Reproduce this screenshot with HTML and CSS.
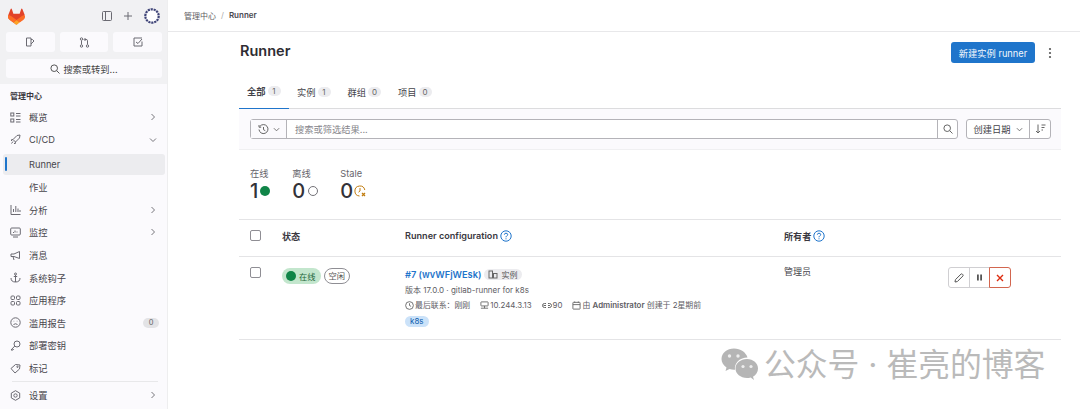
FILE: index.html
```html
<!DOCTYPE html>
<html lang="zh">
<head>
<meta charset="utf-8">
<title>Runner</title>
<link rel="stylesheet" href="styles.css">
</head>
<body>
<div class="app">
<aside class="sidebar">
  <div class="side-top">
    <div class="top-row">
      <svg class="logo" viewBox="0 0 25 24" width="17" height="17"><path fill="#e24329" d="M24.5 9.7l-.03-.09L21.1.8a.9.9 0 0 0-1.7.1l-2.28 7H7.9L5.6.9A.9.9 0 0 0 3.9.8L.53 9.6l-.03.1a6.2 6.2 0 0 0 2.06 7.2l5.2 3.9 3.6 2.7a1 1 0 0 0 1.2 0l3.6-2.7 5.2-3.9a6.2 6.2 0 0 0 2.14-7.2z"/><path fill="#fc6d26" d="M24.5 9.7A11.5 11.5 0 0 0 19.9 11.7L12.5 17.3l4.7 3.6 5.2-3.9a6.2 6.2 0 0 0 2.1-7.3z"/><path fill="#fca326" d="M7.8 20.9l2.5 1.9 1.6 1.2a1 1 0 0 0 1.2 0l1.6-1.2 2.5-1.9-4.7-3.6z"/><path fill="#fc6d26" d="M5.1 11.7A11.5 11.5 0 0 0 .5 9.7a6.2 6.2 0 0 0 2.1 7.3l5.2 3.9 4.7-3.6z"/></svg>
      <div class="top-actions">
        <svg width="10" height="10" viewBox="0 0 10 10" fill="none" stroke="#6b6a72"><rect x=".5" y=".5" width="9" height="9" rx="1"/><path d="M3.500 .5v9"/></svg>
        <svg width="8" height="8" viewBox="0 0 8 8" fill="none" stroke="#6b6a72"><path d="M4 0v8M0 4h8"/></svg>
        <svg width="16" height="16" viewBox="0 0 16 16" fill="none"><circle cx="8" cy="8" r="6.700" fill="#fff" stroke="#3f4478" stroke-width="2.200" stroke-dasharray="2.200 .8"/></svg>
      </div>
    </div>
    <div class="quick">
      <div class="quick-btn"><svg width="10" height="10" viewBox="0 0 10 10" fill="none" stroke="#6b6a72"><path d="M1.500 1h4.500v8H1.500zM6 2.500h1.500L9 4 6 7"/></svg></div>
      <div class="quick-btn"><svg width="11" height="11" viewBox="0 0 11 11" fill="none" stroke="#6b6a72"><circle cx="2.500" cy="2" r="1.200"/><circle cx="2.500" cy="9" r="1.200"/><circle cx="8.500" cy="9" r="1.200"/><path d="M2.500 3.500v4M8.500 7.500V3.500Q8.500 2.500 7 2.500H5.500M6.500 1L5 2.500 6.500 4"/></svg></div>
      <div class="quick-btn"><svg width="10" height="10" viewBox="0 0 10 10" fill="none" stroke="#6b6a72"><path d="M9 1H1v8h8V4.500"/><path d="M3 5l2 1.500L9 2"/></svg></div>
    </div>
    <div class="search-btn">
      <svg width="10" height="10" viewBox="0 0 10 10" fill="none" stroke="#555"><circle cx="4.200" cy="4.200" r="3.300"/><path d="M6.700 6.700L9.500 9.500"/></svg>
      <span>搜索或转到...</span>
    </div>
  </div>
  <nav class="nav">
    <div class="nav-title">管理中心</div>
    <a class="nav-item"><svg class="ni" viewBox="0 0 11 11" fill="none" stroke="#6b6a72"><rect x=".8" y="1" width="3" height="3"/><rect x=".8" y="7" width="3" height="3"/><path d="M6 1.500h4.500M6 4h4.500M6 7.500h4.500M6 10h4.500"/></svg><span class="nl">概览</span><svg class="chev" viewBox="0 0 8 8" fill="none" stroke="#77767c"><path d="M2.500 1l3 3-3 3"/></svg></a>
    <a class="nav-item"><svg class="ni" viewBox="0 0 11 11" fill="none" stroke="#6b6a72"><path d="M3 5.500L7 1.500 10 1 9.500 4 5.500 8zM3 5.500L1 6l1 1M5.500 8L5 10 4 9M3 7.500L1.500 9.500"/></svg><span class="nl">CI/CD</span><svg class="chev" viewBox="0 0 8 8" fill="none" stroke="#77767c"><path d="M1 2.500l3 3 3-3"/></svg></a>
    <a class="nav-item active"><span class="nl sub">Runner</span></a>
    <a class="nav-item"><span class="nl sub">作业</span></a>
    <a class="nav-item"><svg class="ni" viewBox="0 0 11 11" fill="none" stroke="#6b6a72"><path d="M1 1v9.500h9.500M3.500 8V5M5.800 8V2M8 8V4.500M10 8V6"/></svg><span class="nl">分析</span><svg class="chev" viewBox="0 0 8 8" fill="none" stroke="#77767c"><path d="M2.500 1l3 3-3 3"/></svg></a>
    <a class="nav-item"><svg class="ni" viewBox="0 0 11 11" fill="none" stroke="#6b6a72"><rect x=".7" y="1" width="9.600" height="7" rx="1"/><path d="M3 10h5M3 5.500h1M5 3.500v2M7 4.500v1"/></svg><span class="nl">监控</span><svg class="chev" viewBox="0 0 8 8" fill="none" stroke="#77767c"><path d="M2.500 1l3 3-3 3"/></svg></a>
    <a class="nav-item"><svg class="ni" viewBox="0 0 11 11" fill="none" stroke="#6b6a72"><path d="M1 4h3l5.500-2.500v7L4 6.500H1zM3 6.500L4 10"/></svg><span class="nl">消息</span></a>
    <a class="nav-item"><svg class="ni" viewBox="0 0 11 11" fill="none" stroke="#6b6a72"><circle cx="5.500" cy="2" r="1"/><path d="M5.500 3v7M1 6q0 4 4.500 4T10 6M3.800 4.500h3.400"/></svg><span class="nl">系统钩子</span></a>
    <a class="nav-item"><svg class="ni" viewBox="0 0 11 11" fill="none" stroke="#6b6a72"><rect x="1" y="1" width="3.500" height="3.500" rx="1"/><rect x="6.500" y="1" width="3.500" height="3.500" rx="1"/><rect x="1" y="6.500" width="3.500" height="3.500" rx="1"/><rect x="6.500" y="6.500" width="3.500" height="3.500" rx="1"/></svg><span class="nl">应用程序</span></a>
    <a class="nav-item"><svg class="ni" viewBox="0 0 11 11" fill="none" stroke="#6b6a72"><circle cx="5.500" cy="5.500" r="4.700"/><path d="M3.500 7.500q2-1.500 4 0M3.700 4.200h.5M6.800 4.200h.5"/></svg><span class="nl">滥用报告</span><span class="nav-count">0</span></a>
    <a class="nav-item"><svg class="ni" viewBox="0 0 11 11" fill="none" stroke="#6b6a72"><circle cx="7" cy="4" r="3"/><path d="M4.800 6L1 10h2l.5-1"/></svg><span class="nl">部署密钥</span></a>
    <a class="nav-item"><svg class="ni" viewBox="0 0 11 11" fill="none" stroke="#6b6a72"><path d="M1 5.500L5.500 1.500l4.500.5-.5 4L5 10z"/><circle cx="7.500" cy="3.800" r=".7"/></svg><span class="nl">标记</span></a>
    <div class="nav-div"></div>
    <a class="nav-item"><svg class="ni" viewBox="0 0 11 11" fill="none" stroke="#6b6a72"><path d="M5.500.7l4.200 2.400v4.800L5.500 10.300 1.300 7.900V3.100z"/><circle cx="5.500" cy="5.500" r="1.700"/></svg><span class="nl">设置</span><svg class="chev" viewBox="0 0 8 8" fill="none" stroke="#77767c"><path d="M2.500 1l3 3-3 3"/></svg></a>
  </nav>
</aside>
<main class="main">
  <header class="crumbs"><span>管理中心</span><span class="sep">/</span><b>Runner</b></header>
  <div class="content">
    <div class="title-row">
      <h1>Runner</h1>
      <div class="title-actions">
        <button class="primary">新建实例 runner</button>
        <svg width="4" height="12" viewBox="0 0 4 12" fill="#555"><circle cx="2" cy="2" r="1.100"/><circle cx="2" cy="6" r="1.100"/><circle cx="2" cy="10" r="1.100"/></svg>
      </div>
    </div>
    <div class="tabs">
      <div class="tab on">全部<i>1</i></div>
      <div class="tab">实例<i>1</i></div>
      <div class="tab">群组<i>0</i></div>
      <div class="tab">项目<i>0</i></div>
    </div>
    <div class="filter">
      <div class="search">
        <div class="hist">
          <svg width="11" height="11" viewBox="0 0 11 11" fill="none" stroke="#666"><path d="M1.800 2.500A4.500 4.500 0 1 1 1 5.500M1 1v2.200h2.200M5.500 3v2.700l1.800 1"/></svg>
          <svg width="7" height="7" viewBox="0 0 8 8" fill="none" stroke="#666"><path d="M1 2.500l3 3 3-3"/></svg>
        </div>
        <div class="ph">搜索或筛选结果...</div>
        <div class="mag"><svg width="10" height="10" viewBox="0 0 10 10" fill="none" stroke="#666"><circle cx="4.200" cy="4.200" r="3.300"/><path d="M6.700 6.700L9.500 9.500"/></svg></div>
      </div>
      <div class="sort">
        <div class="sort-a">创建日期<svg width="7" height="7" viewBox="0 0 8 8" fill="none" stroke="#666"><path d="M1 2.500l3 3 3-3"/></svg></div>
        <div class="sort-b"><svg width="11" height="10" viewBox="0 0 11 10" fill="none" stroke="#666"><path d="M3 .5v8.500M1 7l2 2 2-2M6.500 1h4M6.500 3.500h3M6.500 6h1.500"/></svg></div>
      </div>
    </div>
    <div class="stats">
      <div class="stat"><div class="s-label">在线</div><div class="s-val">1<span class="dot-on"></span></div></div>
      <div class="stat"><div class="s-label">离线</div><div class="s-val">0<span class="dot-off"></span></div></div>
      <div class="stat"><div class="s-label">Stale</div><div class="s-val">0<svg width="12" height="12" viewBox="0 0 12 12" fill="none" stroke="#c17d10"><path d="M10.800 5A5 5 0 1 0 5.500 11M6 3v3l-1.500 1.200"/><path d="M8 8l3 3M11 8l-3 3" stroke-width="1.300"/></svg></div></div>
    </div>
    <div class="grid g-head">
      <div class="c-check"><span class="check"></span></div>
      <div class="c-status">状态</div>
      <div class="c-conf">Runner configuration <svg class="help" viewBox="0 0 12 12" fill="none" stroke="#1f75cb"><circle cx="6" cy="6" r="5.200"/><path d="M4.300 4.700Q4.500 3.200 6 3.200 7.800 3.300 7.700 4.700 7.600 5.600 6.700 6 6 6.400 6 7.300M6 8.300v1"/></svg></div>
      <div class="c-owner">所有者 <svg class="help" viewBox="0 0 12 12" fill="none" stroke="#1f75cb"><circle cx="6" cy="6" r="5.200"/><path d="M4.300 4.700Q4.500 3.200 6 3.200 7.800 3.300 7.700 4.700 7.600 5.600 6.700 6 6 6.400 6 7.300M6 8.300v1"/></svg></div>
      <div></div>
    </div>
    <div class="grid g-row">
      <div class="c-check"><span class="check"></span></div>
      <div class="c-status badges">
        <span class="b-online"><span class="b-dot"></span>在线</span>
        <span class="b-idle">空闲</span>
      </div>
      <div class="c-conf conf">
        <div class="r-title"><a>#7 (wvWFjWEsk)</a><span class="b-inst"><svg width="10" height="9" viewBox="0 0 10 9" fill="none" stroke="#666"><rect x="1" y="1" width="3.500" height="7"/><rect x="5.500" y="3.500" width="3.500" height="4.500"/></svg>实例</span></div>
        <div class="r-line">版本 17.0.0 · gitlab-runner for k8s</div>
        <div class="r-line meta">
          <div class="m-item"><svg width="9" height="9" viewBox="0 0 10 10" fill="none" stroke="#666"><circle cx="5" cy="5" r="4.300"/><path d="M5 2.500V5l1.800 1"/></svg>最后联系：刚刚</div>
          <div class="m-item"><svg width="9" height="9" viewBox="0 0 10 10" fill="none" stroke="#666"><rect x="1" y="1" width="8" height="4.500" rx=".5"/><path d="M1 8h8M5 5.500V8"/></svg>10.244.3.13</div>
          <div class="m-item"><svg width="10" height="9" viewBox="0 0 10 6" fill="none" stroke="#666"><path d="M4 3H1.500M4 1H2.500Q.5 1 .5 3t2 2H4M6 1h1.500q2 0 2 2t-2 2H6M6 3h2"/></svg>90</div>
          <div class="m-item"><svg width="9" height="9" viewBox="0 0 10 10" fill="none" stroke="#666"><rect x="1" y="1.500" width="8" height="7.500" rx=".5"/><path d="M1 4h8M3 .5v1.500M7 .5v1.500"/></svg><span>由 <b>Administrator</b> 创建于 2星期前</span></div>
        </div>
        <div class="r-tag"><span class="tag">k8s</span></div>
      </div>
      <div class="c-owner owner">管理员</div>
      <div class="acts">
        <span class="act"><svg width="10" height="10" viewBox="0 0 10 10" fill="none" stroke="#555"><path d="M1 9l.4-2.300L7 1.100q.7-.5 1.300 0l.6.6q.5.700 0 1.300L3.300 8.600z"/></svg></span>
        <span class="act"><svg width="7" height="7" viewBox="0 0 7 7" fill="#555"><rect x="1" y=".5" width="1.800" height="6"/><rect x="4.200" y=".5" width="1.800" height="6"/></svg></span>
        <span class="act danger"><svg width="8" height="8" viewBox="0 0 8 8" fill="none" stroke="#dd2b0e" stroke-width="1.400"><path d="M1 1l6 6M7 1L1 7"/></svg></span>
      </div>
    </div>
  </div>
</main>
</div>
<div class="wm">
  <svg width="38" height="34" viewBox="0 0 38 34"><path fill="#b5b5b5" d="M13 .5C6 .5.500 5 .500 11c0 3.500 2 6.500 5 8.500L4.500 23l4-2c1.500.5 3 .7 4.500.7h1C13 15 19 9.500 26.500 9.500 25 4.300 19.500.5 13 .5z"/><path fill="#b5b5b5" d="M26 11c-6.500 0-11.500 4.300-11.500 9.500S19.500 30 26 30c1.200 0 2.500-.2 3.700-.6L33 32l-1-3.200c3-1.800 5-4.800 5-8.300C37 15.300 32.300 11 26 11z"/><circle cx="8.500" cy="8" r="1.700" fill="#eee"/><circle cx="17" cy="8" r="1.700" fill="#eee"/><circle cx="22" cy="18.500" r="1.600" fill="#eee"/><circle cx="30" cy="18.500" r="1.600" fill="#eee"/></svg>
  <span>公众号 · 崔亮的博客</span>
</div>
</body>
</html>
```

FILE: styles.css
```css
* { box-sizing: border-box; }
html, body { margin: 0; height: 100%; overflow: hidden; }
body {
  font-family: Inter, "Noto Sans CJK SC", sans-serif;
  font-size: 9.25px;
  color: #3a383f;
  background: #fff;
  position: relative;
}
svg { display: block; flex: none; }
.app { display: flex; height: 409px; }

/* sidebar */
.sidebar { width: 168px; flex: none; background: #fbfafd; border-right: 1px solid #eeeeef; }
.side-top { background: #f1f1f3; height: 84px; padding: 7px 5px 0 6px; }
.top-row { display: flex; align-items: center; justify-content: space-between; height: 18px; padding-left: 2px; }
.top-actions { display: flex; align-items: center; gap: 12px; margin-right: 2px; }
.quick { display: flex; gap: 5px; margin-top: 7px; }
.quick-btn { flex: 1; height: 20px; background: #fbfafd; border-radius: 3px; display: flex; align-items: center; justify-content: center; }
.search-btn { height: 19px; margin-top: 7px; background: #fbfafd; border-radius: 3px; display: flex; align-items: center; justify-content: center; gap: 3px; color: #444; }
.nav { padding: 0 2px 0 3px; }
.nav-title { font-size: 8px; font-weight: 600; color: #3a383f; height: 22px; padding: 6px 0 0 7px; line-height: 12px; }
.nav-item { height: 22.600px; display: flex; align-items: center; padding: 0 8px 0 7px; border-radius: 3px; color: #47464c; }
.nav-item.active { background: #ececef; position: relative; height: 21px; margin: 2.400px 0 1.400px; }
.nav-item.active::before { content: ""; position: absolute; left: 2px; top: 3px; bottom: 4px; width: 2px; border-radius: 1px; background: #1f75cb; }
.ni { width: 11px; height: 11px; }
.nl { margin-left: 8px; flex: 1; }
.nl.sub { margin-left: 19px; }
.chev { width: 8px; height: 8px; }
.nav-count { background: #e3e3e6; color: #666; border-radius: 8px; width: 16px; height: 10px; line-height: 10px; text-align: center; font-size: 7.500px; margin-right: -2px; }
.nav-div { height: 1px; background: #e8e8ea; margin: 2px 7px 1.600px 9px; }

/* main */
.main { flex: 1; min-width: 0; }
.crumbs { height: 32px; padding-bottom: 1px; border-bottom: 1px solid #e8e8ea; display: flex; align-items: center; padding-left: 16px; font-size: 8px; color: #5e5d64; gap: 5px; }
.crumbs b { font-weight: 600; color: #4a494f; }
.sep { color: #aaa; }
.content { padding: 0 19px 0 71px; }
.title-row { height: 42px; padding-bottom: 1px; display: flex; align-items: center; justify-content: space-between; }
h1 { margin: 0; padding: 0 0 5px 1px; font-size: 14.500px; font-weight: 600; color: #2f2d33; }
.title-actions { display: flex; align-items: center; gap: 13px; padding-right: 9px; }
.primary { width: 84px; height: 21px; border: 0; border-radius: 3px; background: #1f75cb; color: #f3f7fc; font: 9.250px Inter, "Noto Sans CJK SC", sans-serif; padding: 0; }
.tabs { display: flex; height: 35px; border-bottom: 1px solid #dcdcde; }
.tab { height: 35px; padding: 0 9px 0 8px; display: flex; align-items: center; gap: 2px; color: #44434a; white-space: nowrap; }
.tab.on { font-weight: 600; border-bottom: 1.500px solid #1f75cb; width: 50px; }
.tab i { font-style: normal; font-weight: 400; font-size: 8px; background: #ececef; color: #666; border-radius: 7px; min-width: 13px; height: 10px; line-height: 10px; text-align: center; }
.filter { background: #fbfafd; height: 41px; border-bottom: 1px solid #f0f0f2; display: flex; align-items: center; padding: 0 10px 0 11px; gap: 7px; }
.search { flex: 1; height: 20px; display: flex; border: 1px solid #b4b3b8; border-radius: 3px; background: #fff; }
.hist { width: 36px; display: flex; align-items: center; justify-content: center; gap: 4px; border-right: 1px solid #b4b3b8; background: #fbfafd; }
.ph { flex: 1; color: #85848a; padding-left: 8px; line-height: 19px; }
.mag { width: 20px; border-left: 1px solid #b4b3b8; display: flex; align-items: center; justify-content: center; }
.sort { height: 20px; display: flex; border: 1px solid #b4b3b8; border-radius: 3px; background: #fff; margin-left: 1px; }
.sort-a { width: 63px; display: flex; align-items: center; justify-content: center; gap: 5px; border-right: 1px solid #b4b3b8; color: #44434a; }
.sort-b { width: 20px; display: flex; align-items: center; justify-content: center; }
.stats { display: flex; gap: 22px; padding: 17px 0 0 11px; height: 70px; border-bottom: 1px solid #e4e4e6; }
.s-label { color: #66656b; line-height: 13px; }
.s-val { display: flex; align-items: center; gap: 1px; font-size: 20px; font-weight: 500; line-height: 22px; color: #333238; }
.dot-on { width: 10px; height: 10px; border-radius: 50%; background: #108548; margin-left: 1px; }
.dot-off { width: 10px; height: 10px; border-radius: 50%; border: 1.500px solid #737278; margin-left: 2px; }
.grid { display: grid; grid-template-columns: 32px 123px 379px 165px 1fr; padding-left: 11px; border-bottom: 1px solid #e4e4e6; }
.g-head { height: 37px; padding-bottom: 5px; align-items: center; font-weight: 600; color: #3a383f; font-size: 9.100px; }
.c-conf, .c-owner { display: flex; align-items: center; gap: 2px; }
.check { display: block; width: 11px; height: 11px; border: 1px solid #8f8e94; border-radius: 2px; background: #fff; }
.help { width: 12px; height: 12px; }
.g-row { height: 83px; }
.g-row .c-check { padding-top: 10px; }
.badges { display: flex; align-items: flex-start; gap: 3px; padding-top: 11px; font-size: 8.250px; }
.b-online { display: flex; align-items: center; gap: 3px; height: 16px; padding: 0 5px 0 4px; background: #c3e6cd; color: #24663b; border-radius: 8px; }
.b-dot { width: 10px; height: 10px; border-radius: 50%; background: #108548; }
.b-idle { height: 16px; line-height: 14px; padding: 0 4px; border: 1px solid #8f8e94; border-radius: 8px; color: #555; background: #fff; }
.conf { display: block; padding-top: 10px; }
.r-title { display: flex; align-items: center; gap: 3px; height: 14px; }
.r-title a { color: #1f75cb; font-weight: 600; }
.b-inst { display: flex; align-items: center; gap: 3px; background: #ececef; color: #555; border-radius: 6px; height: 11px; padding: 0 5px 0 4px; font-size: 8px; }
.r-line { font-size: 8px; color: #5e5d64; height: 15px; line-height: 15px; margin-top: 2px; white-space: nowrap; }
.meta { display: flex; gap: 10px; margin-top: 0; font-size: 7.900px; }
.m-item { display: flex; align-items: center; gap: 1px; }
.m-item b { font-weight: 600; }
.r-tag { margin-top: 2px; }
.tag { display: inline-block; background: #cbe2f9; color: #0b5cad; border-radius: 6px; height: 11px; line-height: 11px; padding: 0 5px; font-size: 8px; }
.owner { align-items: flex-start; padding-top: 8px; color: #44434a; font-size: 9px; }
.acts { display: flex; align-items: flex-start; justify-content: flex-end; padding: 10px 51px 0 0; }
.act { width: 21.700px; height: 21px; display: flex; align-items: center; justify-content: center; border: 1px solid #d0cfd2; margin-left: -1px; background: #fff; }
.act:first-child { border-radius: 3px 0 0 3px; }
.act.danger { border-color: #d2664f; border-radius: 0 3px 3px 0; position: relative; }

/* watermark */
.wm { position: absolute; left: 721px; top: 347px; display: flex; align-items: center; gap: 5px; color: #bababa; font-size: 31.800px; line-height: 36px; white-space: nowrap; }
```
